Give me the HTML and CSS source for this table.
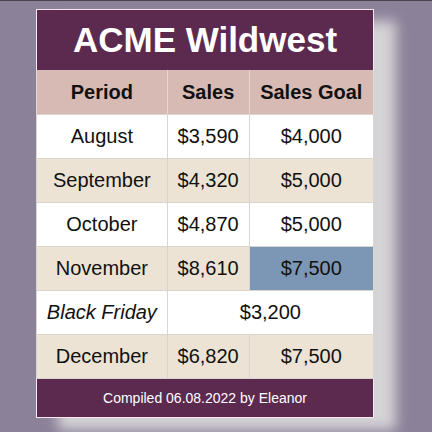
FILE: index.html
```html
<!DOCTYPE html>
<html>
<head>
<meta charset="utf-8">
<link rel="stylesheet" href="styles.css">
</head>
<body>
<div class="topline"></div>
<div class="wrap">
<table class="sales">
  <colgroup>
    <col class="c1"><col class="c2"><col class="c3">
  </colgroup>
  <thead>
    <tr class="title"><th colspan="3">ACME Wildwest</th></tr>
    <tr class="head"><th>Period</th><th>Sales</th><th>Sales Goal</th></tr>
  </thead>
  <tbody>
    <tr class="odd"><td>August</td><td>$3,590</td><td>$4,000</td></tr>
    <tr class="even"><td>September</td><td>$4,320</td><td>$5,000</td></tr>
    <tr class="odd"><td>October</td><td>$4,870</td><td>$5,000</td></tr>
    <tr class="even"><td>November</td><td>$8,610</td><td class="hl">$7,500</td></tr>
    <tr class="odd"><td class="it">Black Friday</td><td colspan="2">$3,200</td></tr>
    <tr class="even"><td>December</td><td>$6,820</td><td>$7,500</td></tr>
  </tbody>
  <tfoot>
    <tr class="foot"><td colspan="3">Compiled 06.08.2022 by Eleanor</td></tr>
  </tfoot>
</table>
</div>
</body>
</html>
```
FILE: styles.css
```css
html, body {
  margin: 0;
  padding: 0;
  background: #8b8199;
  height: 432px;
  overflow: hidden;
}
body {
  font-family: "Liberation Sans", Arial, sans-serif;
}
.topline {
  height: 1px;
  background: #4a4650;
}
.wrap {
  padding: 8px 0 0 36px;
}
.sales {
  border-collapse: collapse;
  width: 338px;
  border: 1px solid #f2e8ee;
  box-shadow: 22px 12px 12px #d4d3d6;
  color: #111;
  text-align: center;
}
.c1 { width: 131px; }
.c2 { width: 82px; }
.c3 { width: 125px; }
.sales th, .sales td {
  padding: 0;
  border: 1px solid #d9d6d2;
}
.title th {
  background: #5c2a4f;
  color: #fff;
  font-size: 35px;
  font-weight: bold;
  height: 60px;
  border: none;
}
.head th {
  background: #d8bab5;
  font-size: 20px;
  font-weight: bold;
  height: 44px;
  border-top: none;
  border-bottom: none;
  border-color: #e6d6d2;
}
.sales tbody td {
  font-size: 20px;
  height: 43px;
}
.odd td { background: #ffffff; }
.even td { background: #ece3d4; }
.sales td.hl { background: #7b97b5; }
.it { font-style: italic; }
.foot td {
  background: #5c2a4f;
  color: #fff;
  font-size: 14px;
  height: 38px;
  border: none;
}
```
